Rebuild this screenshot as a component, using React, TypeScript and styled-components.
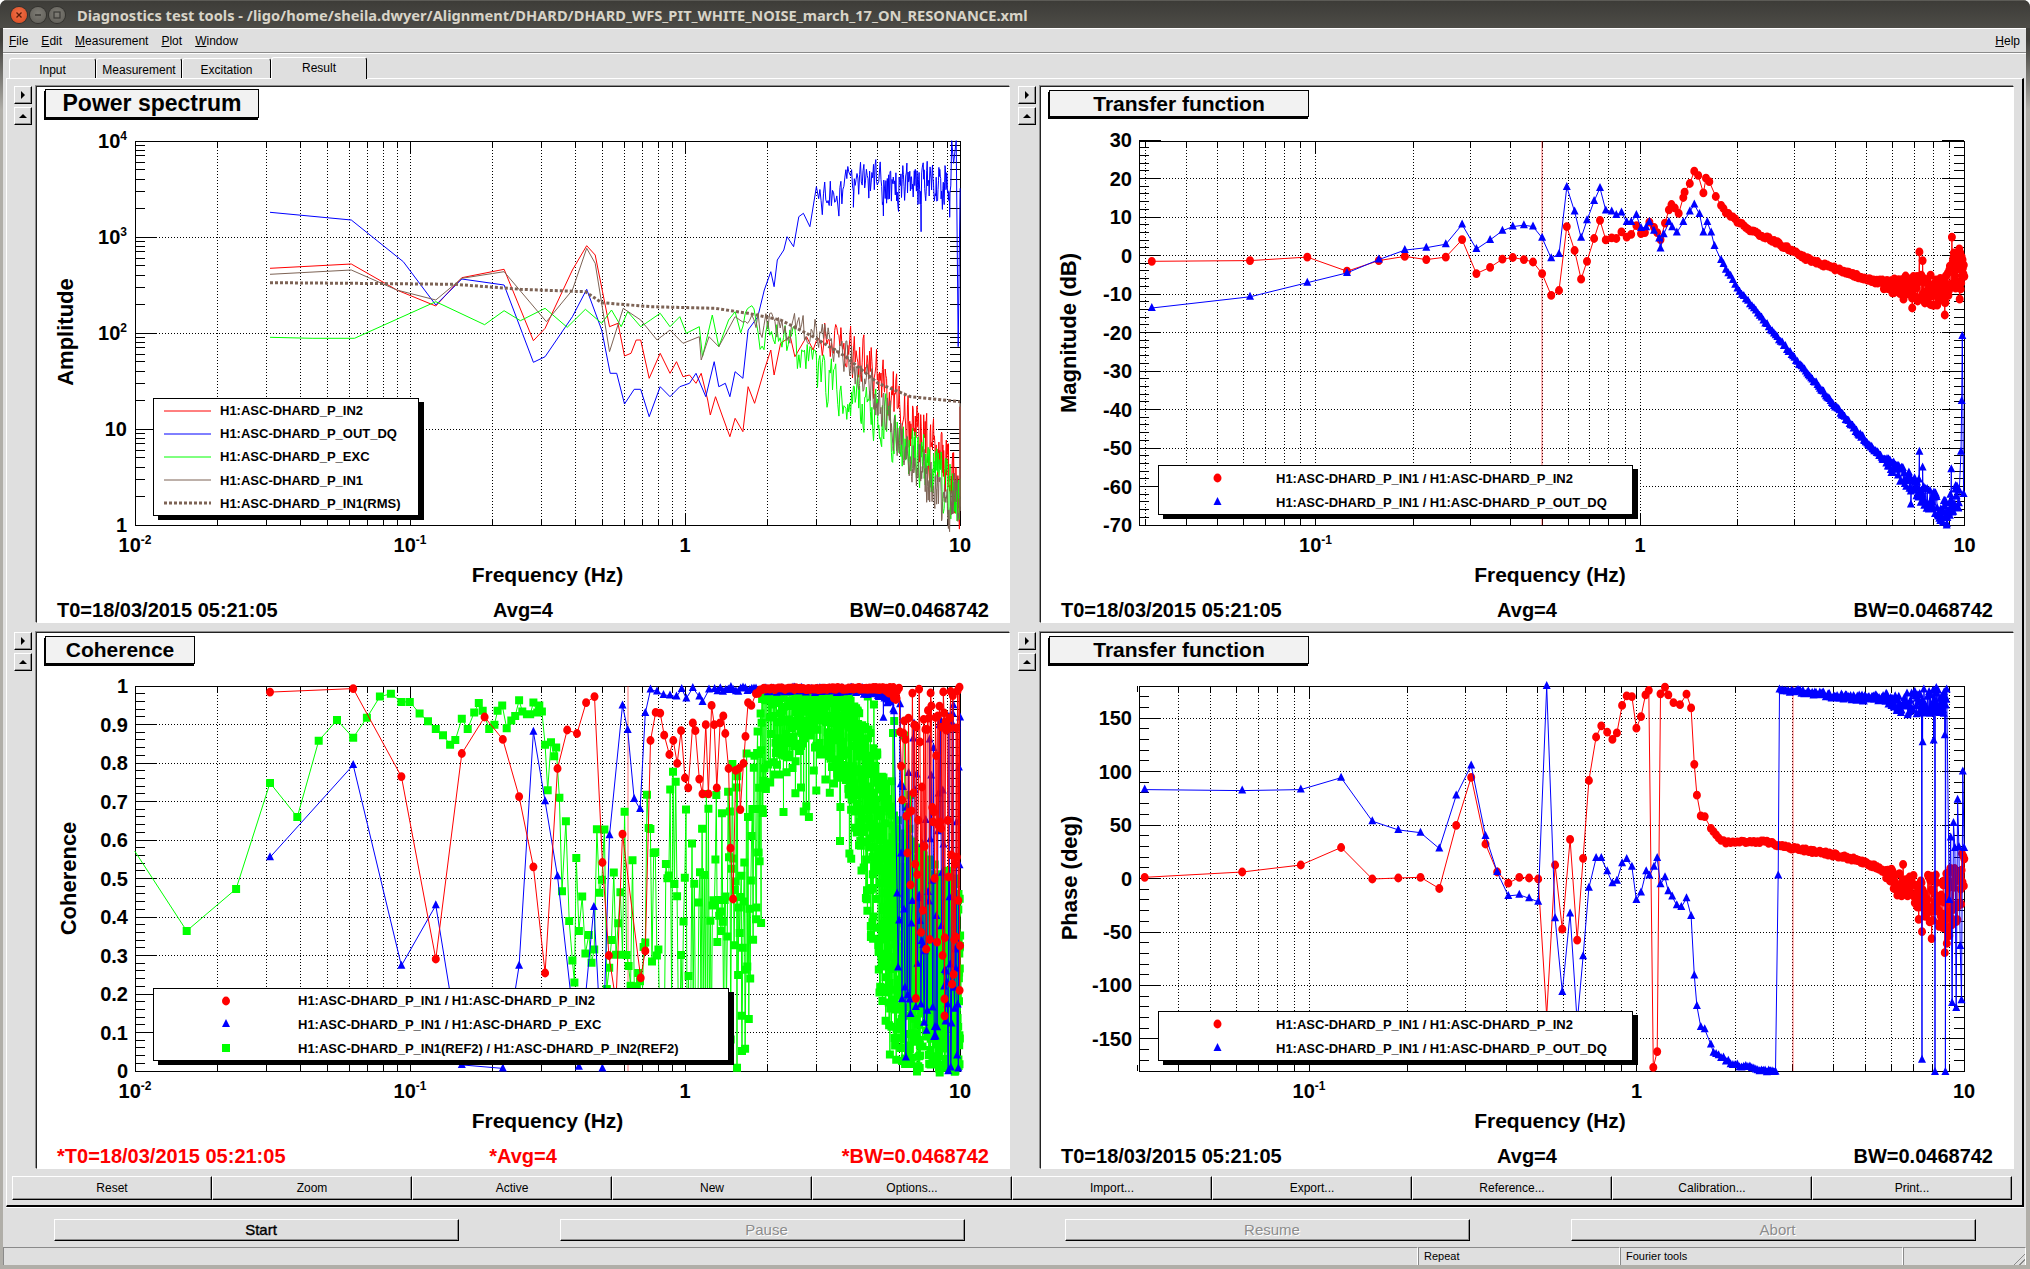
import React from "react";
import styled, { createGlobalStyle } from "styled-components";

type Pt = [number, number];
type MarkerKind = "circle" | "tri" | "square";
interface Series { pts: Pt[]; color: string; width?: number; dash?: string; marker?: MarkerKind; }
interface Tick { y: number; label?: React.ReactNode; }

const RED = "#ff0000";
const BLUE = "#0000ff";
const GREEN = "#00ff00";
const BROWN = "#7d6355";

/* ---------- data helpers ---------- */
const z = (...n: number[]): Pt[] => {
  const out: Pt[] = [];
  for (let i = 0; i < n.length; i += 2) out.push([n[i], n[i + 1]]);
  return out;
};
const random = (seed: number) => () => {
  seed = (seed + 0x6d2b79f5) | 0;
  let t = Math.imul(seed ^ (seed >>> 15), 1 | seed);
  t = (t + Math.imul(t ^ (t >>> 7), 61 | t)) ^ t;
  return ((t ^ (t >>> 14)) >>> 0) / 4294967296;
};
const ramp = (stops: Pt[]) => (x: number) => {
  if (x <= stops[0][0]) return stops[0][1];
  for (let i = 1; i < stops.length; i++) {
    if (x <= stops[i][0]) {
      const [a, b] = stops[i - 1];
      const [c, d] = stops[i];
      return b + ((d - b) * (x - a)) / (c - a || 1);
    }
  }
  return stops[stops.length - 1][1];
};
const gridX = (df: number, x0: number, x1: number, hz1: number, dec: number) => {
  const out: number[] = [];
  for (let i = 1; ; i++) {
    const x = hz1 + dec * Math.log10(df * i);
    if (x > x1) break;
    if (x >= x0) out.push(x);
  }
  return out;
};
const noisy = (seed: number, xs: number[], c: (x: number) => number, a: (x: number) => number, lo = -1e9, hi = 1e9, corr = 0): Pt[] => {
  const r = random(seed);
  let prev = 0;
  return xs.map((x) => {
    prev = corr * prev + (1 - corr) * (r() * 2 - 1) * 1.5;
    const n = corr ? prev : (r() * 2 - 1);
    return [x, Math.min(hi, Math.max(lo, c(x) + n * a(x)))] as Pt;
  });
};
const spread = (seed: number, xs: number[], lo: (x: number) => number, hi: (x: number) => number, p: (x: number) => number): Pt[] => {
  const r = random(seed);
  return xs.map((x) => [x, lo(x) + (hi(x) - lo(x)) * Math.pow(r(), p(x))] as Pt);
};
const byX = (pts: Pt[]) => [...pts].sort((a, b) => a[0] - b[0]);
const mapper = (ox: number, sx: number, oy: number, sy: number) => (pts: Pt[]): Pt[] =>
  pts.map(([x, y]) => [ox + x / sx, oy + y / sy] as Pt);

const SX = 1.5373;
const toA = mapper(0, SX, 130, 3);
const toB = mapper(1010, SX, 80, 2.851);
const toC = mapper(0, SX, 630, 2.851);
const toD = mapper(1010, SX, 630, 2.851);

/* ---------- power spectrum ---------- */
const ax = (df: number, a: number, b: number) => gridX(df, a, b, 1053, 423);
const powerSeries: Series[] = [
  {
    color: RED,
    pts: toA([
      ...z(415,415,540,402,610,480,670,528,710,443,775,418,820,632,838,595,880,420,902,347,915,375,937,590,950,580,960,678,970,670,978,630,985,630,998,745,1015,670,1030,730,1040,695,1050,740,1060,735,1070,760,1078,730,1088,810,1092,855,1100,800,1110,855,1122,920,1130,865,1142,905,1150,770,1160,820,1175,720,1185,660,1190,735,1200,640,1215,620,1222,680,1240,620,1250,660),
      ...noisy(11, ax(0.03125, 1255, 1476), ramp(z(1255,620,1300,650,1350,740,1400,880,1450,1000,1476,1090)), ramp(z(1255,60,1300,70,1476,85)), -1e9, 1e9, 0.3),
      ...z(1476,830,1476,1100),
    ]),
  },
  {
    color: BLUE,
    pts: toA([
      ...z(415,247,540,270,620,395,670,525,710,447,775,465,820,697,838,680,880,560,902,478,925,600,938,730,948,730,960,822,975,778,985,778,998,860,1015,770,1030,800,1045,770,1060,760,1070,730,1085,800,1098,695,1105,770,1115,760,1122,800,1130,725,1142,745,1150,600,1165,560,1175,480,1185,425,1190,470,1195,390,1205,360,1210,320,1220,350,1228,260,1235,250,1245,290,1255,170),
      ...byX([
        ...noisy(12, ax(0.03125, 1258, 1462), ramp(z(1258,225,1280,190,1310,170,1340,165,1462,175)), ramp(z(1258,40,1290,60,1462,60)), -1e9, 1e9, 0.3),
        ...z(1312,232,1358,258,1416,305,1460,262),
      ]),
      ...z(1463,32,1466,100,1470,32,1473,650,1476,175),
    ]),
  },
  {
    color: GREEN,
    pts: toA([
      ...z(415,622,480,625,545,625,670,515,745,584,775,542,800,572,838,535,872,592,900,538,925,580,940,540,955,590,965,545,985,590,1000,570,1015,550,1030,590,1045,560,1055,610,1075,590,1080,680,1095,555,1105,650,1120,570,1130,545),
      ...noisy(13, ax(0.03125, 1138, 1476), ramp(z(1138,600,1200,630,1250,720,1300,790,1350,860,1400,960,1450,1050,1476,1120)), ramp(z(1138,55,1300,70,1476,75)), -1e9, 1e9, 0.3),
    ]),
  },
  {
    color: BROWN,
    pts: toA([
      ...z(415,433,540,420,610,480,670,510,710,445,775,425,840,575,880,480,902,355,915,400,937,665,958,535,985,570,1010,630,1030,600,1050,640,1075,620,1078,690,1090,620,1105,650,1130,560),
      ...noisy(14, ax(0.03125, 1140, 1476), ramp(z(1140,580,1200,590,1250,610,1300,670,1350,810,1400,980,1450,1120,1476,1100)), ramp(z(1140,35,1300,50,1476,70)), -1e9, 1e9, 0.3),
      ...z(1476,820,1476,1130),
    ]),
  },
  {
    color: BROWN,
    width: 3,
    dash: "3 2",
    pts: toA(z(415,458,540,460,700,463,800,478,900,485,925,518,1000,530,1100,535,1150,550,1200,570,1250,620,1300,680,1350,760,1400,800,1476,815)),
  },
];

/* ---------- magnitude ---------- */
const bx = (a: number, b: number) => gridX(0.03125, a, b, 968, 499);
const magSeries: Series[] = [
  {
    color: RED,
    marker: "circle",
    pts: toB(byX([
      ...z(218,517,369,515,457,505,518,545,567,515,607,503,640,512,670,505,695,455,717,552,738,534,757,511,773,506,790,512,804,519,818,552,832,614,844,600,856,418,868,486,878,568,887,517,898,452,907,400,916,456,925,450,932,452,940,433,948,448,955,440,963,415,970,438,976,435,983,405,990,420,995,435,1000,455,1007,408,1013,370,1017,355,1022,365,1028,380,1035,335,1037,320,1045,295,1052,260,1058,272,1066,322,1070,280,1075,290,1085,332),
      ...noisy(21, bx(1092, 1467), ramp(z(1092,355,1100,375,1130,420,1180,465,1230,515,1280,545,1330,575,1360,590,1440,600,1450,540,1467,530)), ramp(z(1092,4,1330,5,1345,15,1380,38,1440,50,1467,70))),
      ...z(1387,650,1398,490,1403,515,1415,640,1437,670,1448,448,1460,625),
    ])),
  },
  {
    color: BLUE,
    marker: "tri",
    pts: toB(byX([
      ...z(218,650,369,618,457,578,518,550,567,512,607,485,640,478,670,468,695,412,717,482,738,456,757,430,773,418,790,414,804,418,818,450,832,508,844,496,856,305,868,375,878,450,887,400,898,345,907,308,916,372,925,375,932,385,940,378,948,405,955,405,963,385,970,422,978,420,983,405,990,430,998,452,1000,480,1005,440,1013,405,1018,420,1025,435,1035,405,1045,375,1052,355,1060,382,1066,435,1072,405,1078,435,1083,473),
      ...noisy(22, bx(1090, 1460), ramp(z(1090,505,1120,600,1160,690,1200,780,1250,890,1300,1000,1350,1095,1380,1140,1440,1240,1450,1190,1460,1190)), ramp(z(1090,3,1340,5,1360,25,1440,40,1460,50))),
      ...z(1398,1060,1403,1105,1385,1210,1418,1215,1447,1110,1440,1270,1462,1060,1463,915,1464,730,1466,1180),
    ])),
  },
];

/* ---------- coherence ---------- */
const cx = (df: number, a: number, b: number) => gridX(df, a, b, 1053, 423);
const cohSeries: Series[] = [
  { color: GREEN, pts: toC(z(207,630,287,858)) },
  {
    color: GREEN,
    marker: "square",
    pts: toC(byX([
      ...z(287,858,363,738,415,436,457,533,490,316,518,257,543,307,564,250,584,190,601,182,617,205,630,205,645,238,658,260,670,282,681,300,692,327,700,314,710,253,719,282,729,235,736,208,742,230,752,282,760,270,765,230,772,215,779,280,786,258,792,245,798,200,803,232,810,240,815,240,820,207,826,235,829,215,833,232,838,327,847,320,852,360,855,335,842,457,860,478,870,545,886,650,864,745,875,830,895,760,890,858,880,942,883,1005,900,922),
      ...spread(31, cx(0.0104, 905, 1160),
        ramp(z(905,560,1030,400,1160,340)),
        ramp(z(905,1020,1030,1200,1160,1262)),
        () => 1),
      ...spread(36, cx(0.0078125, 1162, 1476),
        ramp(z(1162,240,1175,172,1300,178,1340,290,1380,560,1476,720)),
        ramp(z(1162,860,1175,460,1250,330,1300,440,1340,880,1370,1262,1476,1266)),
        ramp(z(1162,1,1175,2,1300,2,1330,1.2,1476,1))),
      ...spread(37, cx(0.06, 1165, 1400),
        () => 175,
        ramp(z(1165,520,1280,560,1330,800,1380,1262,1400,1262)),
        () => 1),
      ...z(1170,835,1292,505,1133,1248,1140,1100),
    ])),
  },
  {
    color: BLUE,
    marker: "tri",
    pts: toC(byX([
      ...z(415,648,543,385,617,957,670,785,710,1240,773,1250,798,957,820,290,838,488,857,702,890,1245,913,790,926,1250,937,585,957,215,965,285,975,482,984,510,992,237,1000,170,1010,175,1020,185,1030,187,1040,190,1048,168,1055,195,1065,165,1075,190,1080,205,1090,170),
      ...spread(32, cx(0.03125, 1095, 1375), ramp(z(1095,162,1375,165)), ramp(z(1095,178,1300,180,1360,195,1375,260)), () => 1),
      ...spread(33, cx(0.05, 1378, 1476), () => 200, () => 1262, () => 1.1),
      ...z(1358,250,1385,440),
    ])),
  },
  {
    color: RED,
    marker: "circle",
    pts: toC(byX([
      ...z(415,177,543,167,617,418,670,938,710,352,745,248,773,312,798,475,820,675,838,978,857,395,872,285,887,295,901,207,914,190,926,663,936,928,947,1060,957,582,985,992,992,915,1000,315,1008,235,1015,237,1021,300,1029,355,1035,315,1041,380,1047,287,1053,422,1058,450,1065,265,1069,287,1075,425,1080,467,1085,270,1089,467,1094,215,1098,270,1102,450,1107,265,1112,245,1115,295,1120,395,1123,622,1127,767,1131,400,1136,395,1138,512,1143,380,1146,303,1150,207,1155,215),
      ...spread(34, cx(0.03125, 1160, 1380), ramp(z(1160,175,1175,165,1380,163)), ramp(z(1160,190,1175,170,1360,170,1380,205)), () => 1),
      ...spread(35, cx(0.055, 1382, 1476), () => 165, ramp(z(1382,420,1400,850,1476,1050)), () => 1.25),
      ...z(1408,1050,1452,1052,1452,1100,1475,163,1476,900),
    ])),
  },
];

/* ---------- phase ---------- */
const dx = (a: number, b: number) => gridX(0.03125, a, b, 963, 504);
const phaseSeries: Series[] = [
  {
    color: RED,
    marker: "circle",
    pts: toD([
      ...z(207,705,357,690,447,670,509,620,557,710,597,707,631,705,660,737,686,557,709,420,731,610,749,690,766,722,783,705,798,707,812,710,825,1100,838,670,849,853,861,597,872,884,881,651,890,429,901,305,909,273,918,291,926,312,933,293,941,215,948,188,956,190,963,280,970,247,977,185,982,172,989,1247,995,1202,1000,182,1007,163,1012,185,1020,207,1030,213,1040,183,1047,222,1052,383,1056,471,1062,530,1068,532),
      ...byX([
        ...noisy(41, dx(1074, 1467), ramp(z(1074,557,1090,595,1100,605,1165,605,1200,622,1250,635,1300,655,1340,680,1360,720,1400,750,1440,790,1467,720)), ramp(z(1074,3,1340,5,1355,30,1400,50,1440,110,1467,90))),
        ...z(1373,668,1397,825,1402,860,1417,880,1437,920),
      ]),
    ]),
  },
  {
    color: BLUE,
    marker: "tri",
    pts: toD([
      ...z(207,455,357,458,447,455,509,421,557,545,597,570,631,578,660,623,686,472,709,386,731,587,749,690,766,758,783,755,798,765,812,775,825,160,838,822,849,1032,861,808,872,1120,881,930,890,735,901,650,909,650,918,688,926,722,933,715,941,665,948,653,956,675,963,770,970,748,978,688,983,700,990,675,995,650,1000,725,1007,705,1012,745,1018,760,1025,785,1032,790,1040,765,1047,815,1052,985,1056,1072,1062,1132,1068,1138),
      ...noisy(44, dx(1074, 1178), ramp(z(1074,1168,1082,1205,1095,1220,1110,1240,1130,1245,1160,1258,1178,1262)), () => 4, 0, 1264),
      ...z(1181,700,1183,170),
      ...byX([
        ...noisy(42, dx(1186, 1440), ramp(z(1186,172,1250,185,1300,195,1350,195,1370,220,1400,200,1440,210)), ramp(z(1186,5,1340,10,1370,30,1400,40,1440,35))),
        ...z(1402,1225,1403,320,1405,170,1420,315,1422,1260,1424,165,1437,300,1438,1260,1440,170),
      ]),
      ...noisy(43, gridX(0.09, 1442, 1467, 963, 504), ramp(z(1442,950,1467,700)), () => 360, 380, 1262),
    ]),
  },
];

/* ---------- axis helpers ---------- */
const range = (from: number, to: number, step: number) => {
  const out: number[] = [];
  for (let v = from; v <= to + 1e-6; v += step) out.push(v);
  return out;
};
const Sup = ({ n }: { n: string }) => <tspan dy={-8} fontSize={12}>{n}</tspan>;
const logY = (v: number) => 525 - 96 * Math.log10(v);
const powerMajor: Tick[] = [
  { y: logY(10000), label: <>10<Sup n="4" /></> },
  { y: logY(1000), label: <>10<Sup n="3" /></> },
  { y: logY(100), label: <>10<Sup n="2" /></> },
  { y: logY(10), label: "10" },
  { y: logY(1), label: "1" },
];
const powerMinor = [1, 10, 100, 1000].flatMap((k) => [2, 3, 4, 5, 6, 7, 8, 9].map((d) => logY(d * k)));

const magY = (v: number) => 525 - ((v + 70) * 385) / 100;
const magMajor: Tick[] = range(-70, 30, 10).map((v) => ({ y: magY(v), label: String(v) }));
const magMinor = range(-70, 30, 2).map(magY);

const cohY = (v: number) => 1071 - v * 385;
const cohMajor: Tick[] = range(0, 10, 1).map((i) => ({ y: cohY(i / 10), label: i === 0 ? "0" : i === 10 ? "1" : `0.${i}` }));
const cohMinor = range(0, 50, 1).map((i) => cohY(i / 50));

const phaseY = (v: number) => 878.5 - v * 1.0694;
const phaseMajor: Tick[] = range(-150, 150, 50).map((v) => ({ y: phaseY(v), label: String(v) }));
const phaseMinor = range(-180, 180, 10).map(phaseY);

/* ---------- styles ---------- */
const Global = createGlobalStyle`
  html, body { margin: 0; padding: 0; background: #fff; }
  #root { width: 2030px; height: 1269px; }
`;
const Win = styled.div`
  width: 2030px;
  height: 1269px;
  display: flex;
  flex-direction: column;
  box-sizing: border-box;
  overflow: hidden;
  border-radius: 7px 7px 0 0;
  background: linear-gradient(#3f3e3a 0, #3f3e3a 40px, #b0aea8 110px);
  font-family: "Liberation Sans", Arial, sans-serif;
  color: #000;
`;
const TitleBar = styled.div`
  height: 28px;
  flex: none;
  display: flex;
  align-items: center;
  padding-left: 11px;
  background: linear-gradient(#3d3c38, #4d4c47);
  border-top: 1px solid #5c5b56;
  box-sizing: border-box;
`;
const WinButtons = styled.div`
  display: flex;
  gap: 3px;
  margin-right: 12px;
`;
const WinButton = styled.span<{ $close?: boolean }>`
  width: 16px;
  height: 16px;
  border-radius: 50%;
  display: flex;
  align-items: center;
  justify-content: center;
  background: ${(p) => (p.$close ? "radial-gradient(circle at 50% 40%, #f0714a, #d9481d)" : "radial-gradient(circle at 50% 40%, #7e7c75, #5d5b55)")};
  box-shadow: 0 0 0 1px #33322e;
  color: ${(p) => (p.$close ? "#5a1c08" : "#3b3a36")};
`;
const WindowTitle = styled.span`
  font: bold 14.65px "Noto Sans", sans-serif;
  color: #d8d4c8;
  white-space: nowrap;
`;
const Body = styled.div`
  flex: 1;
  min-height: 0;
  margin: 0 4px 4px 3px;
  display: flex;
  flex-direction: column;
  background: #dfdfdf;
`;
const MenuBar = styled.div`
  height: 25px;
  flex: none;
  box-sizing: border-box;
  display: flex;
  align-items: center;
  gap: 13px;
  padding: 0 6px;
  border-top: 1px solid #fff;
  border-bottom: 1px solid #8a8a8a;
  box-shadow: 0 1px 0 #fff;
  font-size: 12px;
`;
const MenuItem = styled.span<{ $push?: boolean }>`
  margin-left: ${(p) => (p.$push ? "auto" : "0")};
  &::first-letter { text-decoration: underline; }
`;
const TabRow = styled.div`
  height: 25px;
  flex: none;
  display: flex;
  align-items: flex-end;
  padding-left: 6px;
  font-size: 12px;
`;
const Tab = styled.div<{ $w: number; $active?: boolean }>`
  width: ${(p) => p.$w}px;
  height: ${(p) => (p.$active ? 22 : 20)}px;
  box-sizing: border-box;
  padding-top: ${(p) => (p.$active ? 3 : 4)}px;
  text-align: center;
  background: #dfdfdf;
  border-top: 1px solid #fff;
  border-left: 1px solid #fff;
  border-right: 1px solid #000;
  border-radius: 3px 3px 0 0;
  margin-bottom: ${(p) => (p.$active ? -1 : 0)}px;
  position: relative;
  z-index: ${(p) => (p.$active ? 1 : 0)};
`;
const TabPanel = styled.div`
  width: 2018px;
  margin-left: 3px;
  height: 1129px;
  box-sizing: border-box;
  flex: none;
  padding: 7px 0 5px 5px;
  border-top: 1px solid #fff;
  border-left: 1px solid #fff;
  border-right: 2px solid #000;
  border-bottom: 2px solid #000;
  box-shadow: 0 1px 0 #fff;
`;
const PlotGrid = styled.div`
  display: grid;
  grid-template-columns: 996px 996px;
  grid-template-rows: 537px 536px;
  column-gap: 8px;
  row-gap: 9px;
  margin-left: 2px;
`;
const PlotCell = styled.div`
  display: grid;
  grid-template-columns: 22px 974px;
  min-height: 0;
`;
const SideButtons = styled.div`
  display: flex;
  flex-direction: column;
  gap: 3px;
`;
const SideButton = styled.div`
  width: 18px;
  height: 18px;
  box-sizing: border-box;
  display: flex;
  align-items: center;
  justify-content: center;
  border: 1px solid;
  border-color: #fff #000 #000 #fff;
  box-shadow: inset -1px -1px 0 #8e8e8e;
`;
const Canvas = styled.div`
  position: relative;
  box-sizing: border-box;
  background: #fff;
  display: flex;
  flex-direction: column;
  border: 1px solid;
  border-color: #222 #fff #fff #222;
  box-shadow: -1px -1px 0 #8e8e8e;
`;
const ChartSvg = styled.svg`
  display: block;
  width: 100%;
  height: auto;
  flex: none;
`;
const TickLabel = styled.text`
  font: bold 20px "Liberation Sans", sans-serif;
  fill: #000;
`;
const AxisTitle = styled.text`
  font: bold 21px "Liberation Sans", sans-serif;
  fill: #000;
`;
const YTitle = styled.text`
  font: bold 22px "Liberation Sans", sans-serif;
  fill: #000;
`;
const Pave = styled.div<{ $x: number; $y: number; $w: number; $h: number; $size: number }>`
  position: absolute;
  left: ${(p) => p.$x}px;
  top: ${(p) => p.$y}px;
  width: ${(p) => p.$w}px;
  height: ${(p) => p.$h}px;
  box-sizing: border-box;
  display: flex;
  align-items: center;
  justify-content: center;
  background: #f2f2f2;
  border: 1px solid #000;
  box-shadow: -1px 2px 0 #000;
  font: bold ${(p) => p.$size}px "Liberation Sans", sans-serif;
`;
const Legend = styled.div<{ $x: number; $y: number; $w: number; $h: number }>`
  position: absolute;
  left: ${(p) => p.$x}px;
  top: ${(p) => p.$y}px;
  width: ${(p) => p.$w}px;
  height: ${(p) => p.$h}px;
  box-sizing: border-box;
  display: flex;
  flex-direction: column;
  justify-content: space-around;
  background: #fff;
  border: 1px solid #000;
  box-shadow: 5px 4px 0 #000;
`;
const LegendRow = styled.div`
  display: flex;
  align-items: center;
  font: bold 13px "Liberation Sans", sans-serif;
  white-space: nowrap;
`;
const LegendKey = styled.svg`
  display: block;
  flex: none;
`;
const StatsRow = styled.div<{ $alert?: boolean }>`
  flex: 1;
  display: grid;
  grid-template-columns: 1fr auto 1fr;
  align-items: center;
  padding: 3px 20px 0;
  font: bold 20px "Liberation Sans", sans-serif;
  color: ${(p) => (p.$alert ? "#ff0000" : "#000")};
  white-space: nowrap;
  & > :last-child { text-align: right; }
`;
const ActionRow = styled.div`
  display: grid;
  grid-template-columns: repeat(10, 200px);
  height: 24px;
  margin-top: 8px;
`;
const ActionButton = styled.button`
  appearance: none;
  margin: 0;
  padding: 0;
  font: 12px "Liberation Sans", sans-serif;
  color: #000;
  background: #dfdfdf;
  border: 1px solid;
  border-color: #fff #000 #000 #fff;
  box-shadow: inset -1px -1px 0 #8e8e8e;
`;
const RunRow = styled.div`
  display: grid;
  grid-template-columns: repeat(4, 405px);
  column-gap: 100.5px;
  padding-left: 51px;
  height: 22px;
  margin-top: 12px;
`;
const RunButton = styled.button<{ $disabled?: boolean }>`
  appearance: none;
  margin: 0;
  padding: 0 0 2px 9px;
  font: 15px "Liberation Sans", sans-serif;
  background: #dfdfdf;
  color: ${(p) => (p.$disabled ? "#8c8c8c" : "#000")};
  text-shadow: ${(p) => (p.$disabled ? "1px 1px 0 #fff" : "none")};
  -webkit-text-stroke: ${(p) => (p.$disabled ? "0" : "0.35px #000")};
  border: 1px solid;
  border-color: #fff #000 #000 #fff;
  box-shadow: inset -1px -1px 0 #8e8e8e;
`;
const StatusBar = styled.div`
  display: grid;
  grid-template-columns: 1415px 202px 283px 1fr;
  height: 18px;
  margin-top: 6px;
  font-size: 11px;
`;
const StatusCell = styled.div`
  box-sizing: border-box;
  position: relative;
  padding: 2px 0 0 5px;
  border-top: 1px solid #8a8a8a;
  border-left: 1px solid #8a8a8a;
  border-right: 1px solid #fff;
`;
const Grip = styled.span`
  position: absolute;
  right: 0;
  bottom: 0;
  width: 13px;
  height: 13px;
  background: repeating-linear-gradient(135deg, transparent 0 2px, #8a8a8a 2px 3px, transparent 3px 4px);
  clip-path: polygon(100% 0, 100% 100%, 0 100%);
`;
const BottomEdge = styled.div`
  flex: 1;
  background: #f4f4f4;
`;

/* ---------- chart parts ---------- */
const seriesPath = (pts: Pt[]) =>
  pts.map(([x, y], i) => `${i ? "L" : "M"}${x.toFixed(1)} ${y.toFixed(1)}`).join("");
const markerPath = (kind: MarkerKind, pts: Pt[]) =>
  pts
    .map(([x, y]) => {
      const a = x.toFixed(1);
      const b = y.toFixed(1);
      if (kind === "circle") return `M${(x - 4).toFixed(1)} ${b}a4 4.4 0 1 0 8 0a4 4.4 0 1 0 -8 0z`;
      if (kind === "tri") return `M${a} ${(y - 5).toFixed(1)}l4 8h-8z`;
      return `M${(x - 4).toFixed(1)} ${(y - 4).toFixed(1)}h8v8h-8z`;
    })
    .join("");

function Trace({ s }: { s: Series }) {
  return (
    <>
      <path d={seriesPath(s.pts)} fill="none" stroke={s.color} strokeWidth={s.width ?? 1} strokeDasharray={s.dash} strokeLinejoin="round" />
      {s.marker && <path d={markerPath(s.marker, s.pts)} fill={s.color} />}
    </>
  );
}

interface FrameProps {
  l: number; t: number; r: number; b: number;
  hz1: number; dec: number; fMin: number;
  major: Tick[]; minor: number[];
  xTitle: number; yTitle: string; yTitleX: number; yTitleY: number;
  yLabelX: number;
}
function Frame(f: FrameProps) {
  const xs: { x: number; major: boolean; f: number }[] = [];
  for (let k = -2; k <= 1; k++) {
    for (let d = 1; d <= 9; d++) {
      const v = d * Math.pow(10, k);
      if (v < f.fMin * 0.999 || v > 10.001) continue;
      xs.push({ x: f.hz1 + f.dec * Math.log10(v), major: d === 1, f: v });
    }
  }
  const labels: [number, React.ReactNode][] = [
    [0.01, <>10<Sup n="-2" /></>],
    [0.1, <>10<Sup n="-1" /></>],
    [1, "1"],
    [10, "10"],
  ];
  let ticks = "";
  for (const t of xs) {
    const len = t.major ? 12 : 6;
    ticks += `M${t.x.toFixed(1)} ${f.b}v${-len}M${t.x.toFixed(1)} ${f.t}v${len}`;
  }
  for (const y of f.minor) ticks += `M${f.l} ${y.toFixed(1)}h10M${f.r} ${y.toFixed(1)}h-10`;
  for (const m of f.major) ticks += `M${f.l} ${m.y.toFixed(1)}h22M${f.r} ${m.y.toFixed(1)}h-22`;
  const grid =
    xs.filter((t) => t.x > f.l + 1 && t.x < f.r - 1).map((t) => `M${t.x.toFixed(1)} ${f.t}V${f.b}`).join("") +
    f.major.filter((m) => m.y > f.t + 1 && m.y < f.b - 1).map((m) => `M${f.l} ${m.y.toFixed(1)}H${f.r}`).join("");
  return (
    <>
      <path d={grid} fill="none" stroke="#000" strokeWidth={1} strokeDasharray="1 2" shapeRendering="crispEdges" />
      <rect x={f.l} y={f.t} width={f.r - f.l} height={f.b - f.t} fill="none" stroke="#000" strokeWidth={1} shapeRendering="crispEdges" />
      <path d={ticks} fill="none" stroke="#000" strokeWidth={1} shapeRendering="crispEdges" />
      {f.major.map((m, i) => m.label !== undefined && (
        <TickLabel key={i} x={f.yLabelX} y={m.y + 7} textAnchor="end">{m.label}</TickLabel>
      ))}
      {labels.filter(([v]) => v >= f.fMin).map(([v, node], i) => (
        <TickLabel key={i} x={f.hz1 + f.dec * Math.log10(v)} y={f.b + 27} textAnchor="middle">{node}</TickLabel>
      ))}
      <AxisTitle x={f.xTitle} y={f.b + 57} textAnchor="middle">Frequency (Hz)</AxisTitle>
      <YTitle textAnchor="middle" transform={`translate(${f.yTitleX} ${f.yTitleY}) rotate(-90)`}>{f.yTitle}</YTitle>
    </>
  );
}

function KeyLine({ width, color, thick }: { width: number; color: string; thick?: boolean }) {
  return (
    <LegendKey width={width} height={6}>
      <line x1={10} x2={57} y1={3} y2={3} stroke={color} strokeWidth={thick ? 3 : 1} strokeDasharray={thick ? "3 2" : undefined} />
    </LegendKey>
  );
}
function KeyMarker({ width, color, kind }: { width: number; color: string; kind: MarkerKind }) {
  return (
    <LegendKey width={width} height={12}>
      <path d={markerPath(kind, [[width / 2, 6]])} fill={color} />
    </LegendKey>
  );
}

function Arrow({ dir }: { dir: "right" | "up" }) {
  return (
    <svg width="8" height="8" viewBox="0 0 8 8">
      <path d={dir === "right" ? "M2 0l4 4-4 4z" : "M0 6l4-4 4 4z"} fill="#000" />
    </svg>
  );
}

function Plot(p: {
  ox: number; oy: number; vh: number; alert?: boolean;
  title: string; pave: [number, number, number, number]; paveSize: number;
  frame: FrameProps; series: Series[]; cursor?: [number, number, number];
  legend: { box: [number, number, number, number]; rows: React.ReactNode };
}) {
  const toX = (x: number) => x - p.ox - 1;
  const toY = (y: number) => y - p.oy - 1;
  return (
    <PlotCell>
      <SideButtons>
        <SideButton><Arrow dir="right" /></SideButton>
        <SideButton><Arrow dir="up" /></SideButton>
      </SideButtons>
      <Canvas>
        <ChartSvg viewBox={`${p.ox + 1} ${p.oy + 1} 972 ${p.vh}`}>
          <Frame {...p.frame} />
          {p.cursor && <line x1={p.cursor[0]} x2={p.cursor[0]} y1={p.cursor[1]} y2={p.cursor[2]} stroke="#ff0000" strokeOpacity={0.55} strokeWidth={1} />}
          {p.series.map((s, i) => <Trace key={i} s={s} />)}
        </ChartSvg>
        <Pave $x={toX(p.pave[0])} $y={toY(p.pave[1])} $w={p.pave[2]} $h={p.pave[3]} $size={p.paveSize}>{p.title}</Pave>
        <Legend $x={toX(p.legend.box[0])} $y={toY(p.legend.box[1])} $w={p.legend.box[2]} $h={p.legend.box[3]}>{p.legend.rows}</Legend>
        <StatsRow $alert={p.alert}>
          <span>{p.alert ? "*" : ""}T0=18/03/2015 05:21:05</span>
          <span>{p.alert ? "*" : ""}Avg=4</span>
          <span>{p.alert ? "*" : ""}BW=0.0468742</span>
        </StatsRow>
      </Canvas>
    </PlotCell>
  );
}

const tfRows = (
  <>
    <LegendRow><KeyMarker width={117} color={RED} kind="circle" />H1:ASC-DHARD_P_IN1 / H1:ASC-DHARD_P_IN2</LegendRow>
    <LegendRow><KeyMarker width={117} color={BLUE} kind="tri" />H1:ASC-DHARD_P_IN1 / H1:ASC-DHARD_P_OUT_DQ</LegendRow>
  </>
);

const ACTIONS = ["Reset", "Zoom", "Active", "New", "Options...", "Import...", "Export...", "Reference...", "Calibration...", "Print..."];

export default function App() {
  return (
    <>
      <Global />
      <Win>
        <TitleBar>
          <WinButtons>
            <WinButton $close><svg width="8" height="8" viewBox="0 0 8 8"><path d="M1.5 1.5l5 5M6.5 1.5l-5 5" stroke="currentColor" strokeWidth="1.3" /></svg></WinButton>
            <WinButton><svg width="8" height="8" viewBox="0 0 8 8"><path d="M1 4h6" stroke="currentColor" strokeWidth="1.3" /></svg></WinButton>
            <WinButton><svg width="8" height="8" viewBox="0 0 8 8"><rect x="1" y="1" width="6" height="6" fill="none" stroke="currentColor" strokeWidth="1.2" /></svg></WinButton>
          </WinButtons>
          <WindowTitle>Diagnostics test tools - /ligo/home/sheila.dwyer/Alignment/DHARD/DHARD_WFS_PIT_WHITE_NOISE_march_17_ON_RESONANCE.xml</WindowTitle>
        </TitleBar>
        <Body>
          <MenuBar>
            <MenuItem>File</MenuItem>
            <MenuItem>Edit</MenuItem>
            <MenuItem>Measurement</MenuItem>
            <MenuItem>Plot</MenuItem>
            <MenuItem>Window</MenuItem>
            <MenuItem $push>Help</MenuItem>
          </MenuBar>
          <TabRow>
            <Tab $w={87}>Input</Tab>
            <Tab $w={86}>Measurement</Tab>
            <Tab $w={89}>Excitation</Tab>
            <Tab $w={96} $active>Result</Tab>
          </TabRow>
          <TabPanel>
            <PlotGrid>
              <Plot
                ox={36} oy={86} vh={509}
                title="Power spectrum" pave={[45, 89, 214, 29]} paveSize={23}
                frame={{ l: 135, t: 141, r: 960, b: 525, hz1: 685, dec: 275, fMin: 0.01, major: powerMajor, minor: powerMinor, xTitle: 547.5, yTitle: "Amplitude", yTitleX: 73, yTitleY: 332, yLabelX: 127 }}
                series={powerSeries}
                legend={{
                  box: [153, 398, 266, 118],
                  rows: (
                    <>
                      <LegendRow><KeyLine width={66} color={RED} />H1:ASC-DHARD_P_IN2</LegendRow>
                      <LegendRow><KeyLine width={66} color={BLUE} />H1:ASC-DHARD_P_OUT_DQ</LegendRow>
                      <LegendRow><KeyLine width={66} color={GREEN} />H1:ASC-DHARD_P_EXC</LegendRow>
                      <LegendRow><KeyLine width={66} color={BROWN} />H1:ASC-DHARD_P_IN1</LegendRow>
                      <LegendRow><KeyLine width={66} color={BROWN} thick />H1:ASC-DHARD_P_IN1(RMS)</LegendRow>
                    </>
                  ),
                }}
              />
              <Plot
                ox={1040} oy={86} vh={509}
                title="Transfer function" pave={[1049, 90, 260, 27]} paveSize={21}
                frame={{ l: 1139, t: 141, r: 1964, b: 525, hz1: 1640, dec: 324.5, fMin: 0.03, major: magMajor, minor: magMinor, xTitle: 1550, yTitle: "Magnitude (dB)", yTitleX: 1076, yTitleY: 333, yLabelX: 1132 }}
                series={magSeries}
                cursor={[1542, 141, 525]}
                legend={{ box: [1158, 465, 475, 50], rows: tfRows }}
              />
              <Plot
                ox={36} oy={632} vh={509} alert
                title="Coherence" pave={[45, 636, 150, 28]} paveSize={21}
                frame={{ l: 135, t: 686, r: 960, b: 1071, hz1: 685, dec: 275, fMin: 0.01, major: cohMajor, minor: cohMinor, xTitle: 547.5, yTitle: "Coherence", yTitleX: 76, yTitleY: 878.5, yLabelX: 128 }}
                series={cohSeries}
                cursor={[628, 686, 1071]}
                legend={{
                  box: [153, 988, 576, 73],
                  rows: (
                    <>
                      <LegendRow><KeyMarker width={144} color={RED} kind="circle" />H1:ASC-DHARD_P_IN1 / H1:ASC-DHARD_P_IN2</LegendRow>
                      <LegendRow><KeyMarker width={144} color={BLUE} kind="tri" />H1:ASC-DHARD_P_IN1 / H1:ASC-DHARD_P_EXC</LegendRow>
                      <LegendRow><KeyMarker width={144} color={GREEN} kind="square" />H1:ASC-DHARD_P_IN1(REF2) / H1:ASC-DHARD_P_IN2(REF2)</LegendRow>
                    </>
                  ),
                }}
              />
              <Plot
                ox={1040} oy={632} vh={509}
                title="Transfer function" pave={[1049, 636, 260, 28]} paveSize={21}
                frame={{ l: 1139, t: 686, r: 1964, b: 1071, hz1: 1636.5, dec: 327.5, fMin: 0.03, major: phaseMajor, minor: phaseMinor, xTitle: 1550, yTitle: "Phase (deg)", yTitleX: 1077, yTitleY: 878, yLabelX: 1132 }}
                series={phaseSeries}
                cursor={[1793, 686, 1071]}
                legend={{ box: [1158, 1011, 475, 50], rows: tfRows }}
              />
            </PlotGrid>
            <ActionRow>
              {ACTIONS.map((a) => <ActionButton key={a}>{a}</ActionButton>)}
            </ActionRow>
          </TabPanel>
          <RunRow>
            <RunButton>Start</RunButton>
            <RunButton $disabled>Pause</RunButton>
            <RunButton $disabled>Resume</RunButton>
            <RunButton $disabled>Abort</RunButton>
          </RunRow>
          <StatusBar>
            <StatusCell />
            <StatusCell>Repeat</StatusCell>
            <StatusCell>Fourier tools</StatusCell>
            <StatusCell><Grip /></StatusCell>
          </StatusBar>
          <BottomEdge />
        </Body>
      </Win>
    </>
  );
}
